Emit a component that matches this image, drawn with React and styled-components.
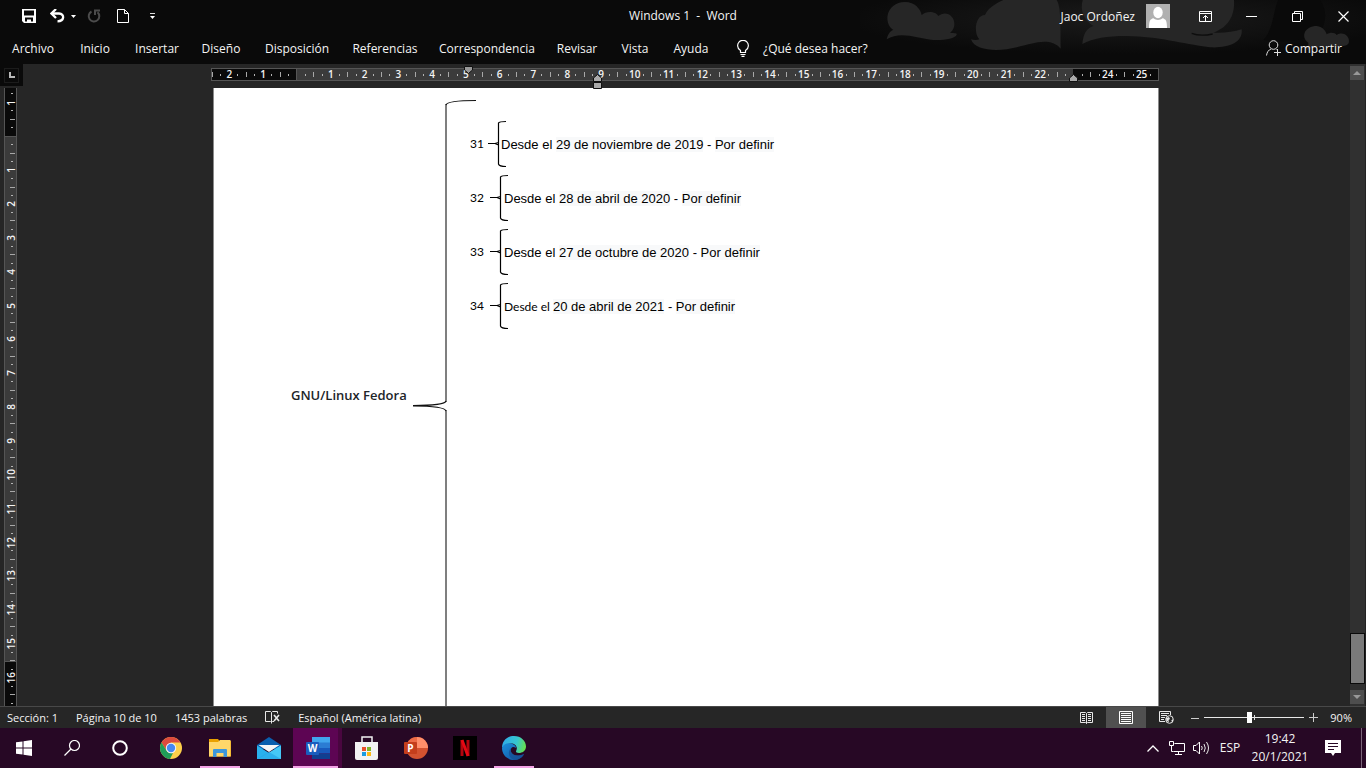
import React from 'react';
import styled, { createGlobalStyle, css } from 'styled-components';

const UI = '"Open Sans", "Noto Sans", sans-serif';

const GlobalStyle = createGlobalStyle`
  *, *::before, *::after { box-sizing: border-box; }
  body { margin: 0; background: #262626; color: #f4f4f4; font-family: ${UI}; font-size: 12px; }
  button { margin: 0; padding: 0; border: 0; background: none; color: inherit; font: inherit; }
  svg { display: block; flex: none; }
  h1, p, ul { margin: 0; padding: 0; font: inherit; list-style: none; }
`;

const Window = styled.div`
  display: flex;
  flex-direction: column;
  height: 100vh;
  overflow: hidden;
`;

/* ---------- Header ---------- */
const Header = styled.header`
  position: relative;
  background: #0a0a0a;
  white-space: nowrap;
`;
const CloudArt = styled.svg`
  position: absolute;
  top: 0;
  right: 0;
`;
const TitleBar = styled.div`
  position: relative;
  display: grid;
  grid-template-columns: 1fr auto 1fr;
  align-items: center;
  height: 32px;
`;
const QuickAccess = styled.div`
  display: flex;
  align-items: center;
  padding-left: 15px;
`;
const QuickButton = styled.button`
  display: flex;
  align-items: center;
  justify-content: center;
  height: 32px;
  width: ${(p) => p.$w}px;
`;
const DocTitle = styled.h1`
  white-space: pre;
  line-height: 32px;
`;
const Account = styled.div`
  display: flex;
  align-items: center;
  justify-content: flex-end;
`;
const UserButton = styled.button`
  display: flex;
  align-items: center;
  gap: 11px;
  margin-right: 12px;
`;
const CaptionButton = styled.button`
  display: grid;
  place-items: center;
  width: 46px;
  height: 32px;
`;
const TabBar = styled.nav`
  position: relative;
  display: flex;
  align-items: center;
  height: 32px;
  padding: 0 24px 0 1px;
`;
const TAB_WIDTHS = { xs: 52, s: 60, m: 64, l: 88, xl: 116 };
const Tab = styled.button`
  width: ${(p) => TAB_WIDTHS[p.$size]}px;
  height: 32px;
`;
const TellMe = styled.button`
  display: flex;
  align-items: center;
  gap: 14px;
  margin-left: 16px;
`;
const Share = styled.button`
  display: flex;
  align-items: center;
  gap: 4px;
  margin-left: auto;
`;

/* ---------- Workspace ---------- */
const Workspace = styled.div`
  flex: 1;
  min-height: 0;
  display: flex;
`;
const Desk = styled.div`
  flex: 1;
  min-width: 0;
  display: grid;
  grid-template-columns: 22px 1fr;
  grid-template-rows: 24px 1fr;
`;
const Corner = styled.div`
  display: grid;
  place-items: center;
  width: 23px;
  height: 22px;
  background: #0a0a0a;
`;
const TabStop = styled.button`
  display: grid;
  place-items: center;
  width: 15px;
  height: 15px;
  border: 1px solid #1c1c1c;
`;
const RulerRow = styled.div`
  display: flex;
  justify-content: center;
  align-items: flex-start;
  padding: 4px 2px 0 0;
`;
const Ruler = styled.div`
  position: relative;
  display: grid;
  grid-template-columns: repeat(28, 1fr);
  width: 948px;
  height: 13px;
  border: 1px solid #555;
  background: linear-gradient(to right, #0a0a0a 84px, #555 84px, #555 85px, #3b3b3b 85px, #3b3b3b 861px, #0a0a0a 861px);
`;
const VRulerBox = styled.div`
  width: 13px;
  margin-left: 4px;
  overflow: hidden;
  border: solid #555;
  border-width: 0 1px;
  min-height: 0;
`;
const VRuler = styled.div`
  display: grid;
  grid-template-rows: repeat(19, 1fr);
  height: 643px;
  margin-top: -3px;
  background: linear-gradient(#0a0a0a 51px, #555 51px, #555 52px, #3b3b3b 52px, #3b3b3b 576px, #555 576px, #555 577px, #0a0a0a 577px);
`;
const mark = css`
  content: '';
  background: #a8a8a8;
`;
const HCell = styled.div`
  display: grid;
  grid-template-columns: 1px 1fr 1px 16px 1px 1fr;
  align-items: center;
  justify-items: center;
  height: 11px;
  font-size: 10px;
  line-height: 11px;
  font-weight: 600;
  &::before { ${mark} width: 1px; height: 5px; grid-column: 1; }
`;
const VCell = styled.div`
  display: grid;
  grid-template-rows: 1px 1fr 1px 16px 1px 1fr;
  align-items: center;
  justify-items: center;
  width: 11px;
  font-size: 10px;
  line-height: 9px;
  font-weight: 600;
  &::before { ${mark} width: 5px; height: 1px; grid-row: 1; margin-left: 4px; }
`;
const Dot = styled.i`
  background: #b4b4b4;
  ${(p) => (p.$v ? 'width: 2px; height: 1px; margin-left: 3px; grid-row:' : 'width: 1px; height: 2px; grid-column:')} ${(p) => p.$at};
`;
const HLabel = styled.span`
  grid-column: 4;
`;
const VLabel = styled.span`
  grid-row: 4;
  writing-mode: vertical-rl;
  rotate: 180deg;
  margin-left: 2px;
`;
const Indent = styled.svg`
  position: absolute;
  left: ${(p) => p.$x}px;
  top: ${(p) => p.$y}px;
`;
const Viewport = styled.main`
  display: flex;
  justify-content: center;
  min-height: 0;
  overflow: hidden;
`;
const Page = styled.article`
  display: flex;
  align-items: flex-start;
  width: 946px;
  padding: 12px 0 0 77px;
  overflow: hidden;
  background: #fff;
  color: #000;
  border: solid #8a8a8a;
  border-width: 0 1px;
  white-space: nowrap;
`;
const Topic = styled.p`
  width: 122px;
  margin-top: 285px;
  color: #212529;
  font-size: 13px;
  font-weight: 600;
  line-height: 20px;
`;
const MainBrace = styled.svg`
  overflow: visible;
`;
const Versions = styled.ul`
  padding: 17px 0 0 23px;
`;
const Version = styled.li`
  display: grid;
  grid-template-columns: ${(p) => (p.$tight ? '18px 13px' : '20px 14px')} auto;
  align-items: center;
  height: 54px;
  svg { overflow: visible; }
`;
const Num = styled.span`
  font: 12px/16px Lato, sans-serif;
`;
const Line = styled.span`
  font: 13px/17px "Liberation Sans", Arial, sans-serif;
`;
const Calibri = styled.span`
  font: 12px/17px Lato, sans-serif;
`;
const Marked = styled.span`
  background: #f8f9fa;
`;

const ScrollTrack = styled.div`
  display: flex;
  flex-direction: column;
  align-items: center;
  width: 16px;
  padding: 2px 1px 2px 0;
  background: #303030;
  border-right: 1px solid #222;
`;
const ScrollButton = styled.button`
  display: grid;
  place-items: center;
  width: 14px;
  height: 14px;
  background: #4e4e4e;
`;
const ScrollThumb = styled.div`
  width: 15px;
  height: 51px;
  margin: auto 0 6px;
  background: #7a7a7a;
  border: 1px solid #0a0a0a;
`;

/* ---------- Status bar ---------- */
const StatusBar = styled.footer`
  display: flex;
  align-items: center;
  height: 22px;
  padding: 0 14px 0 7px;
  border-top: 1px solid #484848;
  background: #262626;
  font-size: 11px;
  line-height: 20px;
  white-space: nowrap;
`;
const StatusItem = styled.button`
  margin-right: 18px;
`;
const StatusRight = styled.div`
  display: flex;
  align-items: center;
  margin-left: auto;
`;
const ViewButton = styled.button`
  display: grid;
  place-items: center;
  width: 40px;
  height: 21px;
  background: ${(p) => (p.$on ? '#505050' : 'transparent')};
`;
const ZoomButton = styled.button`
  display: grid;
  place-items: center;
  width: 18px;
  height: 21px;
`;
const ZoomTrack = styled.label`
  position: relative;
  display: flex;
  width: 100px;
  height: 21px;
  align-items: center;
  &::after {
    content: '';
    position: absolute;
    left: 50px;
    top: 8px;
    width: 1px;
    height: 5px;
    background: #ddd;
  }
`;
const Slider = styled.input`
  appearance: none;
  width: 100%;
  height: 1px;
  margin: 0;
  background: #e8e8e8;
  &::-webkit-slider-thumb {
    appearance: none;
    width: 5px;
    height: 11px;
    background: #fff;
  }
`;
const ZoomValue = styled.button`
  width: 30px;
  text-align: right;
`;

/* ---------- Taskbar ---------- */
const Taskbar = styled.nav`
  display: flex;
  height: 40px;
  background: #270825;
  white-space: nowrap;
`;
const SystemButton = styled.button`
  display: grid;
  place-items: center;
  width: 48px;
  height: 40px;
`;
const Apps = styled.div`
  display: flex;
  padding-left: 2px;
`;
const AppButton = styled.button`
  display: grid;
  place-items: center;
  width: 49px;
  height: 40px;
  background: linear-gradient(#f3a3e6, #f3a3e6) center bottom / 40px ${(p) => (p.$open ? 2 : 0)}px no-repeat;
  ${(p) =>
    p.$active &&
    css`
      border-right: 4px solid #49063f;
      background: linear-gradient(#f3a3e6, #f3a3e6) bottom / 100% 2px no-repeat border-box, #5d0553;
      padding-left: 4px;
    `}
`;
const Tray = styled.div`
  display: flex;
  align-items: center;
  margin: 0 8px 0 auto;
`;
const TrayButton = styled.button`
  display: grid;
  place-items: center;
  width: ${(p) => p.$w}px;
  height: 40px;
  line-height: 18px;
`;
const ShowDesktop = styled.button`
  width: 5px;
  height: 40px;
  border-left: 1px solid #7a6478;
`;

/* ---------- Icons ---------- */
const S = ({ w, h = w, children, ...r }) => (
  <svg width={w} height={h} viewBox={`0 0 ${w} ${h}`} fill="none" aria-hidden="true" {...r}>{children}</svg>
);

const SaveIcon = () => (
  <S w={14}><path fill="#fff" fillRule="evenodd" d="M0 0H14V14H2L0 12ZM2 1.500V6.500H12V1.500ZM3 8.500V12.500H5V10.500H9V12.500H11V8.500Z" /><rect x="6" y="11" width="2" height="2" fill="#fff" /></S>
);
const UndoIcon = () => (
  <S w={15} h={14}><path d="M2 4.500H9C15 5 14.500 12 7.500 12.300" stroke="#fff" strokeWidth="2.300" /><path d="M6 0L1.500 4.500L6 9" stroke="#fff" strokeWidth="2.300" /></S>
);
const RedoIcon = () => (
  <S w={14}><path d="M4.500 2.500A5.300 5.300 0 1 0 10.500 3.200M8 6V1.500H13" stroke="#4c4c4c" strokeWidth="2" /></S>
);
const NewIcon = () => (
  <S w={12} h={14}><path d="M.5.5H7.500L11.500 4.500V13.500H.5ZM7.500.5V4.500H11.500" stroke="#fff" /></S>
);
const CaretIcon = () => <S w={5} h={3}><path d="M0 0H5L2.500 3Z" fill="#fff" /></S>;
const MoreIcon = () => <S w={5} h={6}><path d="M0 .5H5" stroke="#ddd" /><path d="M0 3H5L2.500 6Z" fill="#fff" /></S>;
const Avatar = () => (
  <S w={24}><path fill="#b0b0b0" d="M0 0H24V24H0Z" /><ellipse cx="12" cy="8.500" rx="4.700" ry="5.800" fill="#fff" /><path fill="#fff" d="M3 24C3 17 4 15 7.500 14.200C10 16.500 14 16.500 16.500 14.200C20 15 21 17 21 24Z" /></S>
);
const RibbonIcon = () => (
  <S w={13} h={11}><path d="M.5.5H12.500V10.500H.5ZM.5 2.500H12.500M6.500 10V4.500M4 7L6.500 4.500L9 7" stroke="#fff" /></S>
);
const BulbIcon = () => (
  <S w={12} h={17}><path d="M3.500 12.500V10.500C1.500 9 .6 7.500 .6 5.700A5.300 5.300 0 0 1 11.400 5.700C11.400 7.500 10.500 9 8.500 10.500V12.500ZM3.500 14.500H8.500M4.500 16.300H7.500" stroke="#fff" strokeWidth="1.200" /></S>
);
const ShareIcon = () => (
  <S w={15} h={16}><circle cx="7.500" cy="5" r="4.300" stroke="#ddd" /><path d="M.5 15.500C1 12 2.500 10 5 9M10 9L10.500 9.500M8 12.500H15M11.500 9V16" stroke="#ddd" /></S>
);
const ProofIcon = () => (
  <S w={15} h={13}><path d="M9 10.500H7.500L6.500 11.500L5.500 10.500H.5V.5H5.500L6.500 1.500L7.500.5H12.500V2.500M6.500 1.500V12.500" stroke="#e8e8e8" /><path d="M9 4L14 10M14 4L9 10" stroke="#e8e8e8" strokeWidth="1.600" /></S>
);
const ReadIcon = () => (
  <S w={13} h={12}><path d="M6.500 11.500V1.500L5.500.5H.5V10.500H5.500L6.500 11.500L7.500 10.500H12.500V.5H7.500L6.500 1.500M2 2.500H5M2 4.500H5M2 6.500H5M2 8.500H5M8 2.500H11M8 4.500H11M8 6.500H11M8 8.500H11" stroke="#e8e8e8" /></S>
);
const PrintIcon = () => (
  <S w={14} h={13}><path d="M.5.5H13.500V12.500H.5ZM2 2.500H12M2 4.500H12M2 6.500H12M2 8.500H12M2 10.500H12" stroke="#fff" /></S>
);
const WebIcon = () => (
  <S w={15} h={13}><path d="M6 10.500H.5V.5H11.500V4M2 2.500H10M2 4.500H8M2 6.500H6M2 8.500H5" stroke="#e8e8e8" /><circle cx="10.500" cy="8.500" r="3.800" fill="#262626" stroke="#e8e8e8" /><path d="M7 7L10 6L11 8L9.500 9L10 11L7.500 10ZM12 10L14 8V11Z" fill="#e8e8e8" /></S>
);
const StartIcon = () => (
  <S w={16}><path fill="#fff" d="M0 2.300L6.500 1.400V7.500H0ZM7.500 1.200L16 0V7.500H7.500ZM0 8.500H6.500V14.600L0 13.700ZM7.500 8.500H16V16L7.500 14.800Z" /></S>
);
const SearchIcon = () => <S w={16}><circle cx="10.500" cy="5.500" r="5" stroke="#fff" strokeWidth="1.200" /><path d="M7 9L.5 15.500" stroke="#fff" strokeWidth="1.300" /></S>;
const CortanaIcon = () => <S w={16}><circle cx="8" cy="8" r="6.800" stroke="#fff" strokeWidth="2" /></S>;
const ChromeIcon = () => (
  <S w={22}>
    <circle cx="11" cy="11" r="11" fill="#fdd04a" />
    <path d="M1.500 5.500A11 11 0 0 1 20.500 5.500H11L6.500 13.500Z" fill="#dc4a3d" />
    <path d="M1.500 5.500L6.500 13.500C8 16 10.500 16.500 13 16L10 22A11 11 0 0 1 1.500 5.500Z" fill="#1f9e59" />
    <circle cx="11" cy="11" r="5.200" fill="#f4f4f4" /><circle cx="11" cy="11" r="4.200" fill="#4688f1" />
  </S>
);
const FolderIcon = () => (
  <S w={22} h={18}><path d="M0 0H9L10.500 2H22V17.500H0Z" fill="#e9a100" /><path d="M0 3H9L11 1H21.500V17.500H0Z" fill="#ffd76a" /><path d="M4 18V11Q4 10 5 10H17Q18 10 18 11V18H14.500V14H7.500V18Z" fill="#3c97dc" /></S>
);
const MailIcon = () => (
  <S w={24} h={22}><path d="M0 8L12 0L24 8V12H0Z" fill="#0a5fae" /><path d="M0 8.500L12 16L24 8.500V22H0Z" fill="#29b1ee" /><path d="M24 8.500L1 22H24Z" fill="#45c8f6" /><path d="M0 22L12 15L24 22Z" fill="#1c9fe6" opacity=".6" /><path d="M1.500 8H22.500L12 15Z" fill="#f6f6f6" /></S>
);
const WordIcon = () => (
  <S w={24} h={22}><path d="M6 0H24V6H6Z" fill="#41a5ee" /><path d="M6 5.500H24V11H6Z" fill="#2b7cd3" /><path d="M6 11H24V16.500H6Z" fill="#185abd" /><path d="M6 16.500H24V22H6Z" fill="#103f91" /><rect y="5" width="13" height="13" rx="1" fill="#1a5dbe" /><text x="6.500" y="15" textAnchor="middle" fill="#fff" fontSize="10" fontWeight="700" fontFamily={UI}>W</text></S>
);
const StoreIcon = () => (
  <S w={24}><path d="M7 8V1H17V8" stroke="#f2f2f2" strokeWidth="1.500" /><path d="M0 6H23V22Q23 24 21 24H2Q0 24 0 22Z" fill="#f2f2f2" /><path d="M7 11H11V15H7Z" fill="#e8502a" /><path d="M12 11H16V15H12Z" fill="#7db52a" /><path d="M7 16H11V20H7Z" fill="#1a9be0" /><path d="M12 16H16V20H12Z" fill="#fdb813" /></S>
);
const PptIcon = () => (
  <S w={24} h={22}><circle cx="13" cy="11" r="11" fill="#d35230" /><path d="M13 0A11 11 0 0 1 24 11H13Z" fill="#ff8f6b" /><path d="M13 0A11 11 0 0 0 2 11H13Z" fill="#ed6c47" /><rect y="5" width="13" height="12" rx="1" fill="#c43e1c" /><text x="6.500" y="15" textAnchor="middle" fill="#fff" fontSize="10" fontWeight="700" fontFamily={UI}>P</text></S>
);
const NetflixIcon = () => (
  <S w={24}>
    <rect width="24" height="24" fill="#000" />
    <rect x="7.500" y="4" width="3" height="16" fill="#b1060f" />
    <rect x="13.500" y="4" width="3" height="16" fill="#b1060f" />
    <path d="M9 4L15 20" stroke="#e50914" strokeWidth="3" />
  </S>
);
const EdgeIcon = () => (
  <S w={24}>
    <defs>
      <linearGradient id="edgeTop" x1="0" y1=".3" x2="1" y2=".5"><stop stopColor="#2fa9e8" /><stop offset=".6" stopColor="#36c6d0" /><stop offset="1" stopColor="#66e04e" /></linearGradient>
      <linearGradient id="edgeLow" x1="0" y1="0" x2="1" y2="1"><stop stopColor="#1a8fdc" /><stop offset="1" stopColor="#124f9e" /></linearGradient>
    </defs>
    <path d="M0 12C0 5 5 0 12 0C19 0 24 5 24 10.500C24 15 20 17 17 17C13 17 14 15 14.500 14C16 10 12 7 8.500 7.500C4 8 1 10 0 12Z" fill="url(#edgeTop)" />
    <path d="M0 12C1 8.500 5 6.500 9 7.500C12 8 14 10 14 12C10 9 8 13 9 16C10 19 15 21 22 18C20 22 16 24 12 24C5 24 0 18.500 0 12Z" fill="url(#edgeLow)" />
    <path d="M9 15.500C10 19 15 21 22 18C20 22 16 24 12 24C7 22 5 16 9 12Z" fill="#174f93" opacity=".7" />
  </S>
);
const NetIcon = () => (
  <S w={16} h={14}><path d="M5.500 2.500H15.500V10.500H4.500M9.500 10.500V13M6 13.500H13M.5.5H4.500V4.500H.5ZM2.500 4.500V10.500H4.500" stroke="#fff" /></S>
);
const VolumeIcon = () => (
  <S w={17} h={14}><path d="M.5 4.500H3L6.500 1V13L3 9.500H.5Z" stroke="#fff" /><path d="M8.500 5Q10 7 8.500 9M11 3Q13.500 7 11 11M13.500 1Q17.500 7 13.500 13" stroke="#e8e8e8" /></S>
);
const NoteIcon = () => (
  <S w={16}><path fill="#fff" d="M0 0H16V13H10L8 16L6 13H0Z" /><path d="M3 3.500H13M3 6.500H13M3 9.500H9" stroke="#270825" /></S>
);

const TABS = [
  ['Archivo', 'm'], ['Inicio', 's'], ['Insertar', 'm'], ['Diseño', 'm'], ['Disposición', 'l'],
  ['Referencias', 'l'], ['Correspondencia', 'xl'], ['Revisar', 'm'], ['Vista', 'xs'], ['Ayuda', 's'],
];

const VERSIONS = [
  { n: 31, date: '29 de noviembre de 2019', tight: true },
  { n: 32, date: '28 de abril de 2020' },
  { n: 33, date: '27 de octubre de 2020' },
  { n: 34, date: '20 de abril de 2021', calibri: true },
];

const APPS = [
  { name: 'Google Chrome', Icon: ChromeIcon },
  { name: 'Explorador de archivos', Icon: FolderIcon, open: true },
  { name: 'Correo', Icon: MailIcon },
  { name: 'Word', Icon: WordIcon, active: true },
  { name: 'Microsoft Store', Icon: StoreIcon },
  { name: 'PowerPoint', Icon: PptIcon },
  { name: 'Netflix', Icon: NetflixIcon },
  { name: 'Microsoft Edge', Icon: EdgeIcon, open: true },
];

const hCells = Array.from({ length: 28 }, (_, i) => i - 2);
const vCells = Array.from({ length: 19 }, (_, i) => i - 1);

function HeaderArt() {
  return (
    <CloudArt width="506" height="64" viewBox="0 0 1518 192" aria-hidden="true">
      <defs>
        <radialGradient id="glow" cx=".52" cy=".3" r=".55"><stop stopColor="#1b1b1b" /><stop offset="1" stopColor="#0a0a0a" /></radialGradient>
      </defs>
      <rect width="1518" height="192" fill="url(#glow)" />
      <g fill="#262626">
        <path d="M80 118C84 100 92 92 100 90C70 70 76 8 135 6C165 6 182 28 185 45C200 30 230 35 235 48C255 30 285 45 283 75C282 85 276 95 270 98C285 100 292 98 290 104C286 115 250 122 220 120C170 114 120 92 80 118Z" />
        <path d="M333 118C340 120 350 122 358 118C340 100 345 45 375 45C385 20 420 5 430 0H590C602 20 602 60 602 146C570 110 520 130 470 142C420 155 345 155 333 118Z" />
        <path d="M667 132C670 100 680 85 700 78C670 60 660 30 668 0H1122C1125 40 1110 80 1060 98C1090 100 1120 95 1145 88C1150 130 1100 145 1050 142C960 130 900 110 800 108C740 108 700 115 667 132Z" />
      </g>
      <path d="M995 100Q1020 110 1058 102" stroke="#0d0d0d" strokeWidth="4" fill="none" />
      <path d="M1255 0H1380C1400 30 1400 60 1385 90C1350 120 1290 130 1210 120C1240 90 1240 30 1255 0Z" fill="#0a0a0a" />
      <path d="M1340 150C1345 140 1345 135 1345 128C1320 110 1335 78 1370 78C1390 80 1398 95 1400 103C1412 95 1425 98 1430 105C1450 92 1472 110 1466 130C1455 150 1380 130 1340 150Z" fill="#262626" />
    </CloudArt>
  );
}

function TopChrome() {
  return (
    <Header>
      <HeaderArt />
      <TitleBar>
        <QuickAccess>
          <QuickButton $w={28} aria-label="Guardar"><SaveIcon /></QuickButton>
          <QuickButton $w={28} aria-label="Deshacer"><UndoIcon /></QuickButton>
          <QuickButton $w={5} aria-label="Opciones de deshacer"><CaretIcon /></QuickButton>
          <QuickButton $w={36} aria-label="Rehacer"><RedoIcon /></QuickButton>
          <QuickButton $w={22} aria-label="Nuevo"><NewIcon /></QuickButton>
          <QuickButton $w={36} aria-label="Personalizar"><MoreIcon /></QuickButton>
        </QuickAccess>
        <DocTitle>{'Windows 1  -  Word'}</DocTitle>
        <Account>
          <UserButton>Jaoc Ordoñez<Avatar /></UserButton>
          <CaptionButton aria-label="Opciones de la cinta"><RibbonIcon /></CaptionButton>
          <CaptionButton aria-label="Minimizar"><S w={11} h={11}><path d="M0 5.500H11" stroke="#fff" /></S></CaptionButton>
          <CaptionButton aria-label="Restaurar"><S w={11}><path d="M.5 2.500H8.500V10.500H.5ZM2.500 2.500V.5H10.500V8.500H8.500" stroke="#fff" /></S></CaptionButton>
          <CaptionButton aria-label="Cerrar"><S w={11}><path d="M.5.5L10.500 10.500M10.500.5L.5 10.500" stroke="#fff" strokeWidth="1.200" /></S></CaptionButton>
        </Account>
      </TitleBar>
      <TabBar>
        {TABS.map(([name, size]) => <Tab key={name} $size={size}>{name}</Tab>)}
        <TellMe><BulbIcon />¿Qué desea hacer?</TellMe>
        <Share><ShareIcon />Compartir</Share>
      </TabBar>
    </Header>
  );
}

function Document() {
  return (
    <Page>
      <Topic>GNU/Linux Fedora</Topic>
      <MainBrace width="34" height="620" viewBox="0 0 34 620" fill="none" aria-hidden="true">
        <path d="M33 4V302M33 310V620" stroke="#7f7f7f" strokeWidth="2" />
        <path d="M63 .5C48 .5 34 1.500 33 5M0 305.500C20 305.500 32 304.500 33 301M0 306C20 306 32 307 33 311" stroke="#111" strokeWidth="1.200" />
      </MainBrace>
      <Versions>
        {VERSIONS.map((v) => (
          <Version key={v.n} $tight={v.tight}>
            <Num>{v.n}</Num>
            <svg width="12" height="46" viewBox="0 0 12 46" fill="none" aria-hidden="true">
              <path d="M18 .5C14 .5 11 1 10.500 2V43C11 45 14 45.500 18 45.500M0 22.500H7L10.500 21.500M7 22.500L10.500 24" stroke="#000" strokeWidth="1.200" />
            </svg>
            <Line>
              {v.calibri ? <Calibri>Desde el </Calibri> : 'Desde el '}
              <Marked>{v.date}</Marked> - <Marked>Por definir</Marked>
            </Line>
          </Version>
        ))}
      </Versions>
    </Page>
  );
}

function WorkArea() {
  return (
    <Workspace>
      <Desk>
        <Corner><TabStop aria-label="Tabulación izquierda"><S w={6}><path d="M1 0V5H6" stroke="#b8b8b8" strokeWidth="2" /></S></TabStop></Corner>
        <RulerRow>
          <Ruler>
            {hCells.map((c) => (
              <HCell key={c}>
                <Dot $at={3} />
                <HLabel>{c === 0 || c === 23 ? '' : Math.abs(c)}</HLabel>
                <Dot $at={5} />
              </HCell>
            ))}
            <Indent $x={252} $y={-3} width="9" height="8"><path d="M.5.5H8.500V4L4.500 7.500L.5 4Z" fill="#999" stroke="#111" /></Indent>
            <Indent $x={381} $y={5} width="9" height="15"><path d="M.5 7.500V4L4.500.5L8.500 4V7.500ZM.5 8.500H8.500V14.500H.5Z" fill="#aaa" stroke="#111" /></Indent>
            <Indent $x={857} $y={5} width="9" height="8"><path d="M.5 7.500V4L4.500.5L8.500 4V7.500Z" fill="#aaa" stroke="#111" /></Indent>
          </Ruler>
        </RulerRow>
        <VRulerBox>
          <VRuler>
            {vCells.map((c) => (
              <VCell key={c}>
                <Dot $v $at={3} />
                <VLabel>{c === 0 || c === 17 ? '' : Math.abs(c)}</VLabel>
                <Dot $v $at={5} />
              </VCell>
            ))}
          </VRuler>
        </VRulerBox>
        <Viewport><Document /></Viewport>
      </Desk>
      <ScrollTrack>
        <ScrollButton aria-label="Subir"><S w={8} h={4}><path d="M0 4L4 0L8 4Z" fill="#999" /></S></ScrollButton>
        <ScrollThumb />
        <ScrollButton aria-label="Bajar"><S w={8} h={4}><path d="M0 0L4 4L8 0Z" fill="#999" /></S></ScrollButton>
      </ScrollTrack>
    </Workspace>
  );
}

export default function App() {
  return (
    <>
      <GlobalStyle />
      <Window>
        <TopChrome />
        <WorkArea />
        <StatusBar>
          <StatusItem>Sección: 1</StatusItem>
          <StatusItem>Página 10 de 10</StatusItem>
          <StatusItem>1453 palabras</StatusItem>
          <StatusItem aria-label="Revisión"><ProofIcon /></StatusItem>
          <StatusItem>Español (América latina)</StatusItem>
          <StatusRight>
            <ViewButton aria-label="Modo de lectura"><ReadIcon /></ViewButton>
            <ViewButton $on aria-label="Diseño de impresión"><PrintIcon /></ViewButton>
            <ViewButton aria-label="Diseño web"><WebIcon /></ViewButton>
            <ZoomButton aria-label="Alejar"><S w={8}><path d="M0 4.500H8" stroke="#ccc" /></S></ZoomButton>
            <ZoomTrack><Slider type="range" aria-label="Zoom" min="0" max="100" defaultValue="45" /></ZoomTrack>
            <ZoomButton aria-label="Acercar"><S w={9}><path d="M0 4.500H9M4.500 0V9" stroke="#ccc" /></S></ZoomButton>
            <ZoomValue>90%</ZoomValue>
          </StatusRight>
        </StatusBar>
        <Taskbar>
          <SystemButton aria-label="Inicio de Windows"><StartIcon /></SystemButton>
          <SystemButton aria-label="Buscar"><SearchIcon /></SystemButton>
          <SystemButton aria-label="Cortana"><CortanaIcon /></SystemButton>
          <Apps>
            {APPS.map(({ name, Icon, open, active }) => (
              <AppButton key={name} aria-label={name} $open={open} $active={active}><Icon /></AppButton>
            ))}
          </Apps>
          <Tray>
            <TrayButton $w={24} aria-label="Iconos ocultos"><S w={12} h={7}><path d="M.5 6.500L6 1L11.500 6.500" stroke="#fff" strokeWidth="1.300" /></S></TrayButton>
            <TrayButton $w={24} aria-label="Red"><NetIcon /></TrayButton>
            <TrayButton $w={24} aria-label="Volumen"><VolumeIcon /></TrayButton>
            <TrayButton $w={34}>ESP</TrayButton>
            <TrayButton $w={66}><span>19:42<br />20/1/2021</span></TrayButton>
            <TrayButton $w={40} aria-label="Notificaciones"><NoteIcon /></TrayButton>
          </Tray>
          <ShowDesktop aria-label="Mostrar escritorio" />
        </Taskbar>
      </Window>
    </>
  );
}
